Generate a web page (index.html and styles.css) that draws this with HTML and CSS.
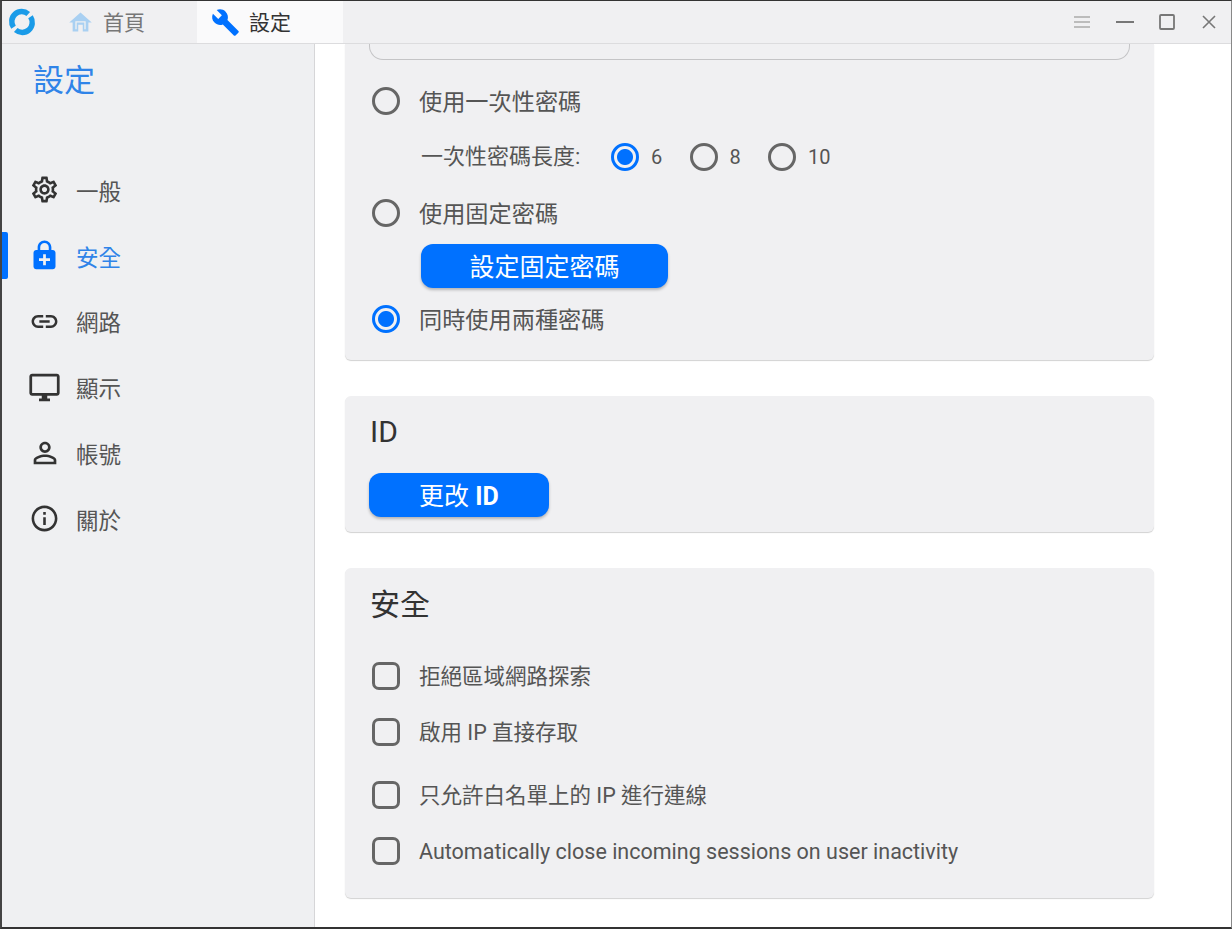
FILE: index.html
```html
<!DOCTYPE html>
<html lang="zh-Hant">

<head>
    <meta charset="UTF-8">
    <title>設定</title>
    <link rel="stylesheet" href="styles.css">
</head>

<body>
    <div class="window">
        <header class="titlebar">
            <svg class="logo" viewBox="0 0 24 24" width="30" height="30">
                <path d="M5.2 16.2A8 8 0 0 1 17 5.6" fill="none" stroke="#1a9be8" stroke-width="4.4" />
                <path d="M18.8 7.8A8 8 0 0 1 7 18.4" fill="none" stroke="#1a9be8" stroke-width="4.4" />
            </svg>
            <div class="tab">
                <svg class="tab_icon" viewBox="0 0 24 24" width="27" height="27">
                    <path fill="#a9d0f2" d="M10 20v-6h4v6h5v-8h3L12 3 2 12h3v8z" />
                    <path fill="none" stroke="#eff0f2" stroke-width="1.2" d="M8 18v-6.5h8V18" />
                </svg>
                <span>首頁</span>
            </div>
            <div class="tab tab_active">
                <svg class="tab_icon" viewBox="0 0 24 24" width="29" height="29">
                    <path fill="#0071ff" d="M22.7 19l-9.1-9.1c.9-2.3.4-5-1.5-6.9-2-2-5-2.4-7.4-1.3L9 6 6 9 1.6 4.7C.4 7.1.9 10.1 2.9 12.1c1.9 1.9 4.6 2.4 6.9 1.5l9.1 9.1c.4.4 1 .4 1.4 0l2.3-2.3c.5-.4.5-1.1.1-1.4z" />
                </svg>
                <span>設定</span>
            </div>
            <div class="win_controls">
                <svg viewBox="0 0 16 16" width="16" height="16" class="ctl_menu">
                    <path d="M0 3h16M0 8h16M0 13h16" stroke="#aaa" stroke-width="1.5" fill="none" />
                </svg>
                <svg viewBox="0 0 18 16" width="18" height="16" class="ctl_min">
                    <path d="M0 8h18" stroke="#777" stroke-width="2" fill="none" />
                </svg>
                <svg viewBox="0 0 16 16" width="16" height="16" class="ctl_max">
                    <rect x="1" y="1" width="14" height="14" rx="1" stroke="#777" stroke-width="1.8" fill="none" />
                </svg>
                <svg viewBox="0 0 14 14" width="14" height="14" class="ctl_close">
                    <path d="M1 1l12 12M13 1L1 13" stroke="#777" stroke-width="1.6" fill="none" />
                </svg>
            </div>
        </header>

        <div class="content">
            <aside class="sidebar">
                <h1 class="side_title">設定</h1>
                <nav>
                    <a class="side_item">
                        <span class="side_icon">
                            <svg viewBox="0 0 24 24" width="31" height="31">
                                <path d="M19.43 12.98c.04-.32.07-.64.07-.98 0-.34-.03-.66-.07-.98l2.11-1.65c.19-.15.24-.42.12-.64l-2-3.46c-.09-.16-.26-.25-.44-.25-.06 0-.12.01-.17.03l-2.49 1c-.52-.4-1.08-.73-1.69-.98l-.38-2.65C14.46 2.18 14.25 2 14 2h-4c-.25 0-.46.18-.49.42l-.38 2.65c-.61.25-1.17.59-1.69.98l-2.49-1c-.06-.02-.12-.03-.18-.03-.17 0-.34.09-.43.25l-2 3.46c-.13.22-.07.49.12.64l2.11 1.65c-.04.32-.07.65-.07.98 0 .33.03.66.07.98l-2.11 1.65c-.19.15-.24.42-.12.64l2 3.46c.09.16.26.25.44.25.06 0 .12-.01.17-.03l2.49-1c.52.4 1.08.73 1.69.98l.38 2.65c.03.24.24.42.49.42h4c.25 0 .46-.18.49-.42l.38-2.65c.61-.25 1.17-.59 1.69-.98l2.49 1c.06.02.12.03.18.03.17 0 .34-.09.43-.25l2-3.46c.12-.22.07-.49-.12-.64l-2.11-1.65zm-1.98-1.71c.04.31.05.52.05.73 0 .21-.02.43-.05.73l-.14 1.13.89.7 1.08.84-.7 1.21-1.27-.51-1.04-.42-.9.68c-.43.32-.84.56-1.25.73l-1.06.43-.16 1.13-.2 1.35h-1.4l-.19-1.35-.16-1.13-1.06-.43c-.43-.18-.83-.41-1.23-.71l-.91-.7-1.06.43-1.27.51-.7-1.21 1.08-.84.89-.7-.14-1.13c-.03-.31-.05-.54-.05-.74s.02-.43.05-.73l.14-1.13-.89-.7-1.08-.84.7-1.21 1.27.51 1.04.42.9-.68c.43-.32.84-.56 1.25-.73l1.06-.43.16-1.13.2-1.35h1.39l.19 1.35.16 1.13 1.06.43c.43.18.83.41 1.23.71l.91.7 1.06-.43 1.27-.51.7 1.21-1.07.85-.89.7.14 1.13zM12 8c-2.21 0-4 1.79-4 4s1.79 4 4 4 4-1.79 4-4-1.79-4-4-4zm0 6c-1.1 0-2-.9-2-2s.9-2 2-2 2 .9 2 2-.9 2-2 2z" />
                            </svg>
                        </span>
                        <span>一般</span>
                    </a>
                    <a class="side_item side_active">
                        <span class="side_icon">
                            <svg viewBox="0 0 24 24" width="33" height="33">
                                <path d="M18 8h-1V6c0-2.76-2.24-5-5-5S7 3.24 7 6v2H6c-1.1 0-2 .9-2 2v10c0 1.1.9 2 2 2h12c1.1 0 2-.9 2-2V10c0-1.1-.9-2-2-2zM8.9 6c0-1.71 1.39-3.1 3.1-3.1s3.1 1.39 3.1 3.1v2H8.9V6zM16 16h-3v3h-2v-3H8v-2h3v-3h2v3h3v2z" />
                            </svg>
                        </span>
                        <span>安全</span>
                    </a>
                    <a class="side_item">
                        <span class="side_icon">
                            <svg viewBox="0 0 24 24" width="31" height="31">
                                <path d="M3.9 12c0-1.71 1.39-3.1 3.1-3.1h4V7H7c-2.76 0-5 2.24-5 5s2.24 5 5 5h4v-1.9H7c-1.71 0-3.1-1.39-3.1-3.1zM8 13h8v-2H8v2zm9-6h-4v1.9h4c1.71 0 3.1 1.39 3.1 3.1s-1.39 3.1-3.1 3.1h-4V17h4c2.76 0 5-2.24 5-5s-2.24-5-5-5z" />
                            </svg>
                        </span>
                        <span>網路</span>
                    </a>
                    <a class="side_item">
                        <span class="side_icon">
                            <svg viewBox="0 0 24 24" width="33" height="33">
                                <path d="M21 2H3c-1.1 0-2 .9-2 2v12c0 1.1.9 2 2 2h7v2H8v2h8v-2h-2v-2h7c1.1 0 2-.9 2-2V4c0-1.1-.9-2-2-2zm0 14H3V4h18v12z" />
                            </svg>
                        </span>
                        <span>顯示</span>
                    </a>
                    <a class="side_item">
                        <span class="side_icon">
                            <svg viewBox="0 0 24 24" width="34" height="34">
                                <path d="M12 5.9c1.16 0 2.1.94 2.1 2.1s-.94 2.1-2.1 2.1S9.9 9.16 9.9 8s.94-2.1 2.1-2.1m0 9c2.97 0 6.1 1.46 6.1 2.1v1.1H5.9V17c0-.64 3.13-2.1 6.1-2.1M12 4C9.79 4 8 5.79 8 8s1.79 4 4 4 4-1.79 4-4-1.79-4-4-4zm0 9c-2.67 0-8 1.34-8 4v3h16v-3c0-2.66-5.33-4-8-4z" />
                            </svg>
                        </span>
                        <span>帳號</span>
                    </a>
                    <a class="side_item">
                        <span class="side_icon">
                            <svg viewBox="0 0 24 24" width="31" height="31">
                                <path d="M11 7h2v2h-2zm0 4h2v6h-2zm1-9C6.48 2 2 6.48 2 12s4.48 10 10 10 10-4.48 10-10S17.52 2 12 2zm0 18c-4.41 0-8-3.59-8-8s3.59-8 8-8 8 3.59 8 8-3.59 8-8 8z" />
                            </svg>
                        </span>
                        <span>關於</span>
                    </a>
                </nav>
            </aside>

            <main class="main">
                <section class="card card_first">
                    <div class="clipped_input"></div>
                    <div class="row row_pw1"><span class="radio"></span><span class="lb">使用一次性密碼</span></div>
                    <div class="row row_len">
                        <span class="len_lb">一次性密碼長度:</span>
                        <span class="radio radio_on"></span><span class="num">6</span>
                        <span class="radio"></span><span class="num">8</span>
                        <span class="radio"></span><span class="num">10</span>
                    </div>
                    <div class="row row_pw2"><span class="radio"></span><span class="lb">使用固定密碼</span></div>
                    <button class="btn btn_pw">設定固定密碼</button>
                    <div class="row row_both"><span class="radio radio_on"></span><span class="lb">同時使用兩種密碼</span></div>
                </section>

                <section class="card card_id">
                    <h2 class="card_title">ID</h2>
                    <button class="btn btn_id">更改 <b>ID</b></button>
                </section>

                <section class="card card_sec">
                    <h2 class="card_title">安全</h2>
                    <div class="check_list">
                        <div class="row check_row"><span class="check"></span><span class="lb">拒絕區域網路探索</span></div>
                        <div class="row check_row"><span class="check"></span><span class="lb">啟用 IP 直接存取</span></div>
                        <div class="row check_row check_row_gap"><span class="check"></span><span class="lb">只允許白名單上的 IP 進行連線</span></div>
                        <div class="row check_row"><span class="check"></span><span class="lb">Automatically close incoming sessions on user inactivity</span></div>
                    </div>
                </section>
            </main>
        </div>
    </div>
</body>

</html>
```

FILE: styles.css
```css
* {
    margin: 0;
    padding: 0;
    box-sizing: border-box;
}

html,
body {
    height: 100%;
    overflow: hidden;
    background: #fff;
}

body {
    font-family: Roboto, "Noto Sans CJK TC", sans-serif;
}

.window {
    height: 929px;
    display: flex;
    flex-direction: column;
    border-top: 1px solid #333;
    border-left: 2px solid #444;
    border-bottom: 2px solid #333;
    border-right: 1px solid #888;
    overflow: hidden;
}

.titlebar {
    height: 43px;
    flex: none;
    display: flex;
    align-items: stretch;
    background: #f0f0f2;
    border-bottom: 1px solid #dcdcde;
}

.logo {
    margin: 6px 0 0 5px;
}

.tab {
    width: 160px;
    display: flex;
    align-items: center;
    padding-left: 30px;
    font-size: 21px;
    color: #777;
}

.tab span {
    padding-bottom: 3px;
}

.tab_icon {
    margin-right: 9px;
}

.tab_active {
    width: 146px;
    padding-left: 14px;
    background: #fafafb;
    color: #333;
}

.win_controls {
    margin-left: auto;
    display: flex;
    align-items: center;
    padding-right: 15px;
}

.ctl_min {
    margin-left: 26px;
}

.ctl_max {
    margin-left: 25px;
}

.ctl_close {
    margin-left: 27px;
}

.content {
    flex: 1;
    display: flex;
    min-height: 0;
}

.sidebar {
    width: 313px;
    flex: none;
    background: #eff0f2;
    border-right: 1px solid #d6d6d8;
}

.side_title {
    margin: 17px 0 0 31px;
    font-size: 31px;
    line-height: 40px;
    font-weight: 400;
    color: #2f84e8;
}

.sidebar nav {
    margin-top: 56px;
}

.side_item {
    height: 65.8px;
    display: flex;
    align-items: center;
    padding-left: 26px;
    font-size: 22.5px;
    color: #555;
}

.side_icon {
    width: 33px;
    margin-right: 15px;
    display: flex;
    justify-content: center;
}

.side_icon svg {
    flex: none;
    fill: #333;
}

.side_active {
    color: #2f84e8;
    position: relative;
}

.side_active::before {
    content: "";
    position: absolute;
    left: 0;
    top: 9px;
    width: 6px;
    height: 47px;
    background: #0071ff;
    border-radius: 0 2px 2px 0;
}

.side_active .side_icon svg {
    fill: #0071ff;
}

.main {
    flex: 1;
    padding-left: 30px;
    min-width: 0;
}

.card {
    width: 809px;
    background: #f0f0f2;
    border-radius: 6px;
    box-shadow: 0 1px 1px rgba(0, 0, 0, 0.18);
    margin-bottom: 36px;
    padding-left: 24px;
}

.card_first {
    height: 316px;
    border-radius: 0 0 6px 6px;
}

.clipped_input {
    width: 761px;
    height: 16px;
    border: 1px solid #c4c4c6;
    border-top: none;
    border-radius: 0 0 14px 14px;
}

.row {
    display: flex;
    align-items: center;
}

.lb {
    font-size: 23.2px;
    line-height: 30px;
    padding-top: 2px;
    color: #555;
    margin-left: 19px;
}

.radio {
    width: 28px;
    height: 28px;
    flex: none;
    margin-left: 3px;
    border-radius: 50%;
    border: 3px solid #666;
    background: transparent;
}

.radio_on {
    border-color: #0071ff;
    background: radial-gradient(circle, #0071ff 0 7.5px, transparent 8.5px);
}

.row_pw1 {
    margin-top: 25px;
}

.row_len {
    margin-top: 24px;
    padding-left: 52px;
}

.len_lb {
    font-size: 22px;
    line-height: 32px;
    color: #555;
    width: 190px;
    flex: none;
}

.num {
    font-size: 20px;
    color: #555;
    margin-left: 12px;
    width: 38.5px;
}

.row_len .radio {
    margin-left: 0;
}

.row_pw2 {
    margin-top: 24px;
}

.btn {
    display: block;
    height: 44px;
    border: none;
    border-radius: 12px;
    background: #0071ff;
    color: #fff;
    font-family: inherit;
    font-size: 25px;
    padding-bottom: 3px;
    box-shadow: 0 2px 3px rgba(0, 0, 0, 0.25);
}

.btn_pw {
    width: 247px;
    margin: 15px 0 0 52px;
}

.row_both {
    margin-top: 15px;
}

.card_id {
    height: 136px;
    padding-top: 16px;
}

.card_title {
    font-size: 30px;
    line-height: 40px;
    font-weight: 400;
    color: #333;
    margin-left: 1px;
}

.btn_id {
    width: 180px;
    margin-top: 21px;
}

.card_sec {
    height: 330px;
    padding-top: 17px;
}

.check_list {
    margin-top: 23px;
}

.check_row {
    height: 56px;
}

.check_row .lb {
    font-size: 21.5px;
}

.check_row_gap {
    margin-top: 7px;
}

.check {
    width: 28px;
    height: 28px;
    flex: none;
    margin-left: 3px;
    border: 3px solid #666;
    border-radius: 7px;
}
```
